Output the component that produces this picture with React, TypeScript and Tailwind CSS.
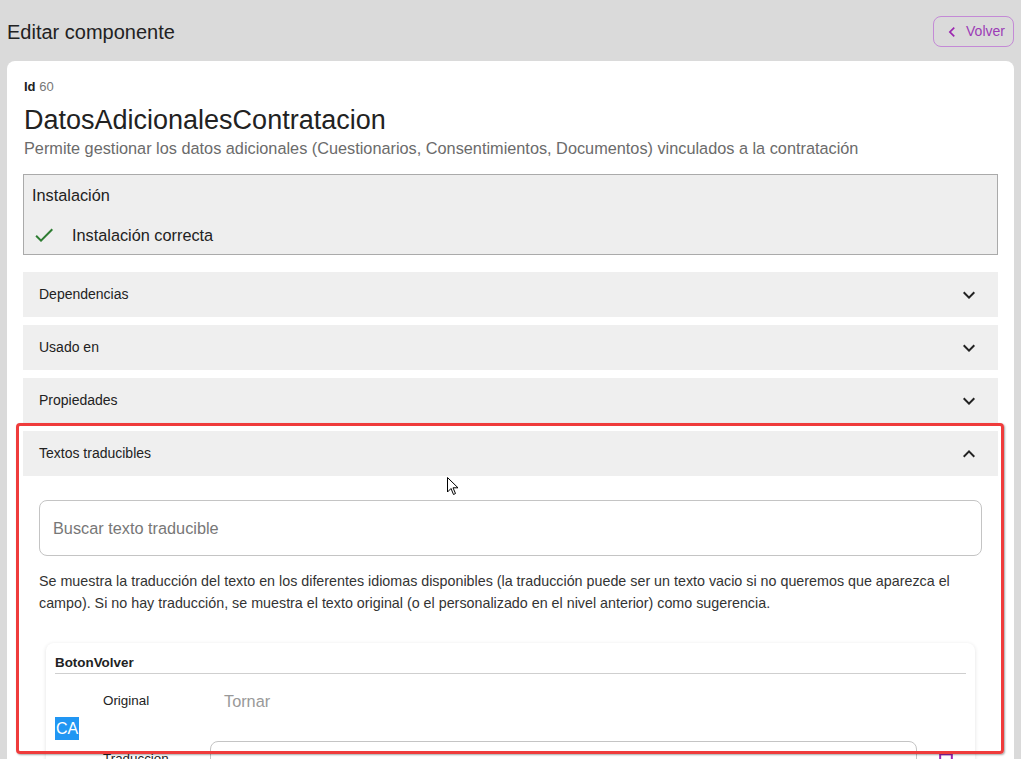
const font = { fontFamily: '"Liberation Sans", Arial, sans-serif' };

function ExpandIcon({ open }: { open?: boolean }) {
  return (
    <svg viewBox="0 0 24 24" className="w-6 h-6 fill-[#222]">
      {open ? (
        <path d="m12 8-6 6 1.41 1.41L12 10.83l4.59 4.58L18 14z" />
      ) : (
        <path d="M16.59 8.59 12 13.17 7.41 8.59 6 10l6 6 6-6z" />
      )}
    </svg>
  );
}

function AccordionRow({ title, open = false }: { title: string; open?: boolean }) {
  return (
    <div className="h-[45px] bg-[#efefef] flex items-center justify-between pl-4 pr-[17px]">
      <span className="text-[14px] text-[#222]">{title}</span>
      <ExpandIcon open={open} />
    </div>
  );
}

export default function App() {
  return (
    <div style={font} className="relative h-[759px] overflow-hidden bg-[#dadada] px-[7px] pt-4">
      {/* header */}
      <div className="flex items-center justify-between h-[31px]">
        <h1 className="text-[20px] text-[#222]">Editar componente</h1>
        <button className="h-[31px] w-[81px] rounded-lg border border-[#c48ad6] flex items-center justify-center gap-1 text-[14px] text-[#9c3cb6]">
          <svg viewBox="0 0 24 24" className="w-5 h-5 fill-[#9c27b0]">
            <path d="M15.41 7.41 14 6l-6 6 6 6 1.41-1.41L10.83 12z" />
          </svg>
          <span>Volver</span>
        </button>
      </div>

      {/* card */}
      <div className="mt-[14px] bg-white rounded-lg px-4 pt-[18px] pb-6">
        <div className="pl-px">
          <div className="text-[13px] leading-4">
            <span className="font-bold text-[#222]">Id</span> <span className="text-[#777]">60</span>
          </div>
          <div className="mt-2 text-[27px] leading-[34px] text-[#222]">DatosAdicionalesContratacion</div>
          <div className="text-[16.3px] leading-[22px] text-[#6b6b6b]">
            Permite gestionar los datos adicionales (Cuestionarios, Consentimientos, Documentos) vinculados a la contratación
          </div>
        </div>

        <div className="mt-[15px] bg-[#eeeeee] border border-[#aaaaaa] px-2 pt-[10px] pb-[9px]">
          <div className="text-[16.3px] leading-5 text-[#222]">Instalación</div>
          <div className="mt-5 flex items-center h-5">
            <svg viewBox="0 0 24 24" className="w-6 h-6 fill-[#2e7d32] shrink-0">
              <path d="M9 16.17 4.83 12l-1.42 1.41L9 19 21 7l-1.41-1.41z" />
            </svg>
            <span className="ml-4 text-[16.3px] text-[#222]">Instalación correcta</span>
          </div>
        </div>

        <div className="mt-[17px] flex flex-col gap-2">
          <AccordionRow title="Dependencias" />
          <AccordionRow title="Usado en" />
          <AccordionRow title="Propiedades" />
          <div>
            <AccordionRow title="Textos traducibles" open />
            <div className="px-4 pt-6">
              <div className="h-[56px] rounded-lg border border-[#c4c4c4] flex items-center px-[13px]">
                <span className="text-[16.3px] text-[#777]">Buscar texto traducible</span>
              </div>
              <p className="mt-[14px] text-[14.3px] leading-[22px] text-[#333]">
                Se muestra la traducción del texto en los diferentes idiomas disponibles (la traducción puede ser un texto vacio si no queremos que aparezca el campo). Si no hay traducción, se muestra el texto original (o el personalizado en el nivel anterior) como sugerencia.
              </p>
              <div className="mt-[29px] mx-[7px] rounded-lg bg-white shadow-[0_1px_4px_rgba(0,0,0,0.12)] px-[9px] pt-3 pb-4">
                <div className="text-[13.4px] leading-4 font-bold text-[#222] pb-[2px] border-b border-[#cfcfcf]">BotonVolver</div>
                <div className="flex items-start">
                  <div className="mt-[43px] w-6 h-[23px] bg-[#2196f3] text-white text-[16px] flex items-center justify-center shrink-0">CA</div>
                  <div className="ml-6 flex flex-col">
                    <div className="flex items-center h-[51px] pt-1">
                      <span className="w-[121px] text-[13.4px] text-[#222]">Original</span>
                      <span className="text-[16.3px] text-[#999]">Tornar</span>
                    </div>
                    <div className="mt-[16px] flex items-start">
                      <span className="w-[107px] pt-[8px] text-[13.4px] text-[#222]">Traduccion</span>
                      <div className="w-[707px] h-[56px] rounded-lg border border-[#c4c4c4] flex items-center px-[13px]">
                        <span className="text-[16.3px] text-[#999]">Tornar</span>
                      </div>
                      <svg viewBox="0 0 24 24" className="ml-[19px] mt-[10px] w-5 h-5">
                        <rect x="5" y="4" width="14" height="16" fill="none" stroke="#9c27b0" strokeWidth="2.4" />
                      </svg>
                    </div>
                  </div>
                </div>
              </div>
            </div>
          </div>
        </div>
      </div>

      {/* annotation highlight */}
      <div className="absolute left-4 top-[423px] w-[988px] h-[331px] rounded border-[3px] border-[#ef3b3b] shadow-[1px_1px_2px_rgba(0,0,0,0.35)] pointer-events-none" />

      {/* mouse cursor */}
      <svg viewBox="0 0 12 19" className="absolute left-[447px] top-[477px] w-[12px] h-[19px]">
        <path d="M0.5 0.5 L0.5 15 L4 11.5 L6.5 17.5 L8.5 16.5 L6 10.8 L11 10.8 Z" fill="white" stroke="black" strokeWidth="1" strokeLinejoin="round" />
      </svg>
    </div>
  );
}
